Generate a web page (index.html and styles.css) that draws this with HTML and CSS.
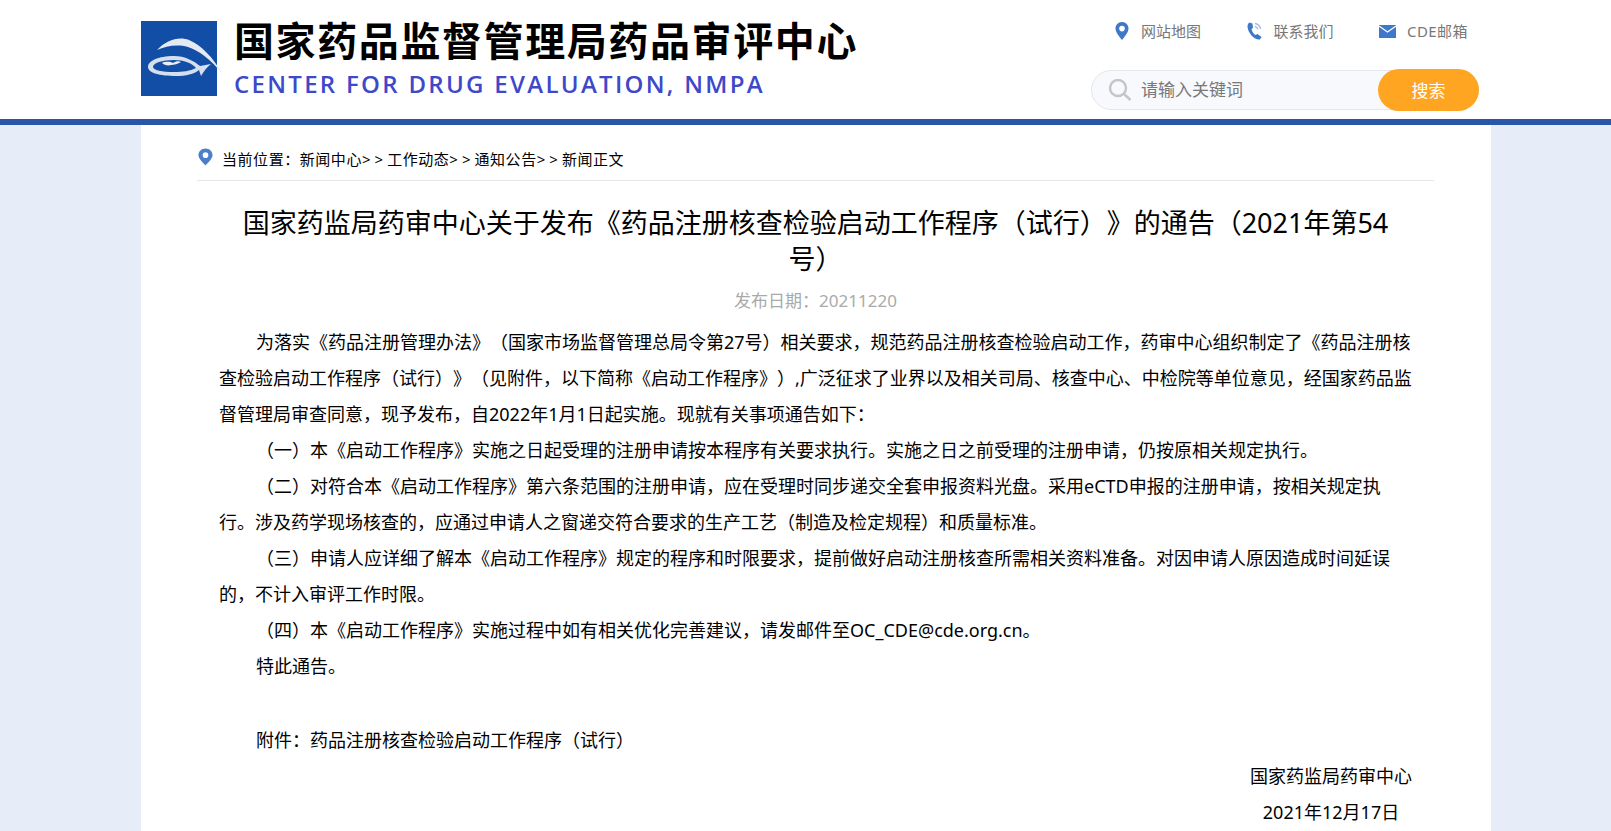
FILE: index.html
```html
<!DOCTYPE html>
<html lang="zh-CN">

<head>
    <meta charset="UTF-8">
    <meta name="viewport" content="width=device-width, initial-scale=1.0">
    <title>国家药监局药审中心关于发布《药品注册核查检验启动工作程序（试行）》的通告（2021年第54号）</title>
    <link rel="stylesheet" href="styles.css">
</head>

<body>

    <header class="top">
        <div class="top-inner">
            <a class="brand" href="#">
                <svg class="logo" viewBox="0 0 76 75">
                    <rect width="76" height="75" fill="#134ea6" />
                    <path d="M16 29C25 19 38 15 48 19C60 24 72 36 82 54C70 38 57 29 47 26C36 23 25 25 16 29Z" fill="#e4eaf3" />
                    <path d="M33 35C17 35 7 40 7 46C7 52 19 55 35 55C45 55 53 53 58 49L60 55C63 50 66 46 70 43L59 45C53 40 44 35 33 35ZM33 39C43 39 51 42 55 47C49 50 42 51 33 51C21 51 12 49 12 46C12 42 21 39 33 39Z" fill="#d5dfee" />
                    <path d="M21 42C25 40 30 41 32 42C35 40 38 40 40 41C37 43 33 44 30 44C27 45 23 44 21 42Z" fill="#e9eef6" />
                </svg>
                <div class="brand-text">
                    <h1 class="brand-cn">国家药品监督管理局药品审评中心</h1>
                    <div class="brand-en">CENTER FOR DRUG EVALUATION, NMPA</div>
                </div>
            </a>
            <div class="tools">
                <ul class="links">
                    <li>
                        <svg class="ico" viewBox="0 0 16 18">
                            <path fill-rule="evenodd" d="M8 0C4 0 1.5 3 1.5 6.5C1.5 10.5 6 15.5 8 18C10 15.5 14.500 10.500 14.500 6.500C14.500 3 12 0 8 0ZM8 3.800A2.800 2.800 0 1 1 8 9.400A2.800 2.800 0 1 1 8 3.800Z" fill="#3f78c8" />
                        </svg>
                        <span>网站地图</span>
                    </li>
                    <li>
                        <svg class="ico" viewBox="0 0 16 18">
                            <path d="M2.500 0.500L5.500 1.500L6 6L4.500 7C5 9.500 6.500 12 8.500 13L10.500 12L14.500 15L13 17.500C8 18.500 1.500 12 0.500 5C0.500 3 1 1.500 2.500 0.500Z" fill="#3f78c8" />
                            <path d="M8 1.500C11 2 13 4 13.500 7M8 4.500C9.500 4.800 10.500 5.800 10.800 7.500" fill="none" stroke="#9db8de" stroke-width="1.300" />
                        </svg>
                        <span>联系我们</span>
                    </li>
                    <li class="link-mail">
                        <svg class="ico ico-mail" viewBox="0 0 17 14">
                            <rect y="1" width="17" height="13" fill="#3f78c8" />
                            <path d="M0 2L8.500 8L17 2" fill="none" stroke="#fff" stroke-width="1.300" />
                        </svg>
                        <span>CDE邮箱</span>
                    </li>
                </ul>
                <form class="search">
                    <svg class="search-ico" viewBox="0 0 24 22">
                        <circle cx="10" cy="9" r="8" fill="none" stroke="#c6c6c6" stroke-width="2.500" />
                        <path d="M16 15L22.500 21" stroke="#c6c6c6" stroke-width="2.500" />
                    </svg>
                    <input class="search-input" type="text" placeholder="请输入关键词">
                    <button class="search-btn" type="button">搜索</button>
                </form>
            </div>
        </div>
    </header>

    <main class="wrap">
        <div class="crumb">
            <svg class="crumb-ico" viewBox="0 0 16 18">
                <path fill-rule="evenodd" d="M8 0C3.800 0 0.500 3 0.500 7C0.500 11 6 15.500 8 18C10 15.500 15.500 11 15.500 7C15.500 3 12.200 0 8 0ZM8 4A3 3 0 1 1 8 10A3 3 0 1 1 8 4Z" fill="#4a7fcb" />
            </svg>
            <span>当前位置：新闻中心<i class="sep">&gt;&gt;</i>工作动态<i class="sep">&gt;&gt;</i>通知公告<i class="sep">&gt;&gt;</i>新闻正文</span>
        </div>

        <h2 class="title">国家药监局药审中心关于发布《药品注册核查检验启动工作程序（试行）》的通告（2021年第54号）</h2>
        <div class="date">发布日期：20211220</div>

        <div class="con">
            <p>为落实《药品注册管理办法》（国家市场监督管理总局令第27号）相关要求，规范药品注册核查检验启动工作，药审中心组织制定了《药品注册核查检验启动工作程序（试行）》（见附件，以下简称《启动工作程序》）,广泛征求了业界以及相关司局、核查中心、中检院等单位意见，经国家药品监督管理局审查同意，现予发布，自2022年1月1日起实施。现就有关事项通告如下：</p>
            <p>（一）本《启动工作程序》实施之日起受理的注册申请按本程序有关要求执行。实施之日之前受理的注册申请，仍按原相关规定执行。</p>
            <p>（二）对符合本《启动工作程序》第六条范围的注册申请，应在受理时同步递交全套申报资料光盘。采用eCTD申报的注册申请，按相关规定执行。涉及药学现场核查的，应通过申请人之窗递交符合要求的生产工艺（制造及检定规程）和质量标准。</p>
            <p>（三）申请人应详细了解本《启动工作程序》规定的程序和时限要求，提前做好启动注册核查所需相关资料准备。对因申请人原因造成时间延误的，不计入审评工作时限。</p>
            <p>（四）本《启动工作程序》实施过程中如有相关优化完善建议，请发邮件至OC_CDE@cde.org.cn。</p>
            <p>特此通告。</p>
            <p class="blank">&nbsp;</p>
            <p>附件：药品注册核查检验启动工作程序（试行）</p>
            <div class="sign">
                <div>国家药监局药审中心</div>
                <div>2021年12月17日</div>
            </div>
        </div>
    </main>

</body>

</html>
```

FILE: styles.css
```css
* {
    box-sizing: border-box;
}

body {
    margin: 0;
    padding: 0;
    background: #e6ecf8;
    color: #000;
    font-family: "Noto Sans", "Noto Sans CJK SC", sans-serif;
    text-spacing-trim: space-all;
}

ul {
    margin: 0;
    padding: 0;
    list-style: none;
}

/* 顶部 */
.top {
    height: 125px;
    background: #fff;
    border-bottom: 6px solid #2a56a9;
}

.top-inner {
    width: 1350px;
    margin-left: 141px;
    padding-right: 12px;
    display: flex;
    justify-content: space-between;
}

.brand {
    display: flex;
    gap: 17px;
    padding-top: 21px;
    color: inherit;
    text-decoration: none;
}

.logo {
    flex: none;
    width: 76px;
    height: 75px;
    overflow: visible;
}

.brand-cn {
    margin: 0;
    font-size: 40px;
    line-height: 40px;
    font-weight: 700;
    letter-spacing: 1.6px;
}

.brand-en {
    margin-top: 10px;
    font-family: "Open Sans", sans-serif;
    font-size: 24px;
    line-height: 26px;
    font-weight: 600;
    letter-spacing: 2.3px;
    color: #3d49c9;
}

.tools {
    width: 388px;
}

.links {
    display: flex;
    gap: 45.5px;
    padding: 20px 0 0 23px;
    font-size: 15px;
    line-height: 22px;
    color: #777;
}

.links li {
    display: flex;
    align-items: center;
    gap: 11px;
}

.link-mail span {
    letter-spacing: .4px;
}

.ico {
    width: 16px;
    height: 18px;
}

.ico-mail {
    width: 17px;
    height: 14px;
}

.search {
    display: flex;
    align-items: center;
    height: 40px;
    margin-top: 28px;
    padding-left: 16px;
    background: #f8f9fd;
    border: 1px solid #e5e7ec;
    border-radius: 20px;
}

.search-ico {
    flex: none;
    width: 24px;
    height: 22px;
}

.search-input {
    flex: 1;
    min-width: 0;
    height: 37px;
    margin-bottom: 1px;
    padding: 0 0 0 9px;
    border: 0;
    outline: 0;
    background: transparent;
    font: inherit;
    font-size: 17px;
}

.search-input::placeholder {
    color: #777;
    opacity: 1;
}

.search-btn {
    flex: none;
    width: 101px;
    height: 42px;
    margin: 0 -1px;
    padding: 0 0 2px;
    border: 0;
    border-radius: 21px;
    background: #ffa521;
    color: #fff;
    font: inherit;
    font-size: 17px;
}

/* 正文 */
.wrap {
    width: 1350px;
    min-height: calc(100vh - 125px);
    margin-left: 141px;
    padding: 0 57px 0 56px;
    background: #fff;
}

.crumb {
    display: flex;
    gap: 9px;
    padding: 23px 0 10px 1px;
    border-bottom: 1px solid #e6e6e6;
    font-size: 15px;
    line-height: 22px;
    letter-spacing: .55px;
}

.crumb-ico {
    width: 15px;
    height: 18px;
}

.sep {
    font-style: normal;
    letter-spacing: 4px;
}

.title {
    margin: 24px 0 0;
    padding: 0 35px;
    font-size: 27px;
    line-height: 36px;
    font-weight: 400;
    text-align: center;
}

.date {
    margin-top: 11px;
    font-size: 17px;
    line-height: 25px;
    color: #aaa;
    text-align: center;
}

.con {
    margin-top: 11px;
    padding: 0 20px 0 22px;
    font-size: 18px;
    line-height: 36px;
}

.con p {
    margin: 0;
    text-indent: 37px;
}

.con .blank {
    height: 38px;
}

.sign {
    width: 164px;
    margin: 0 1px 0 auto;
    text-align: center;
}
```
